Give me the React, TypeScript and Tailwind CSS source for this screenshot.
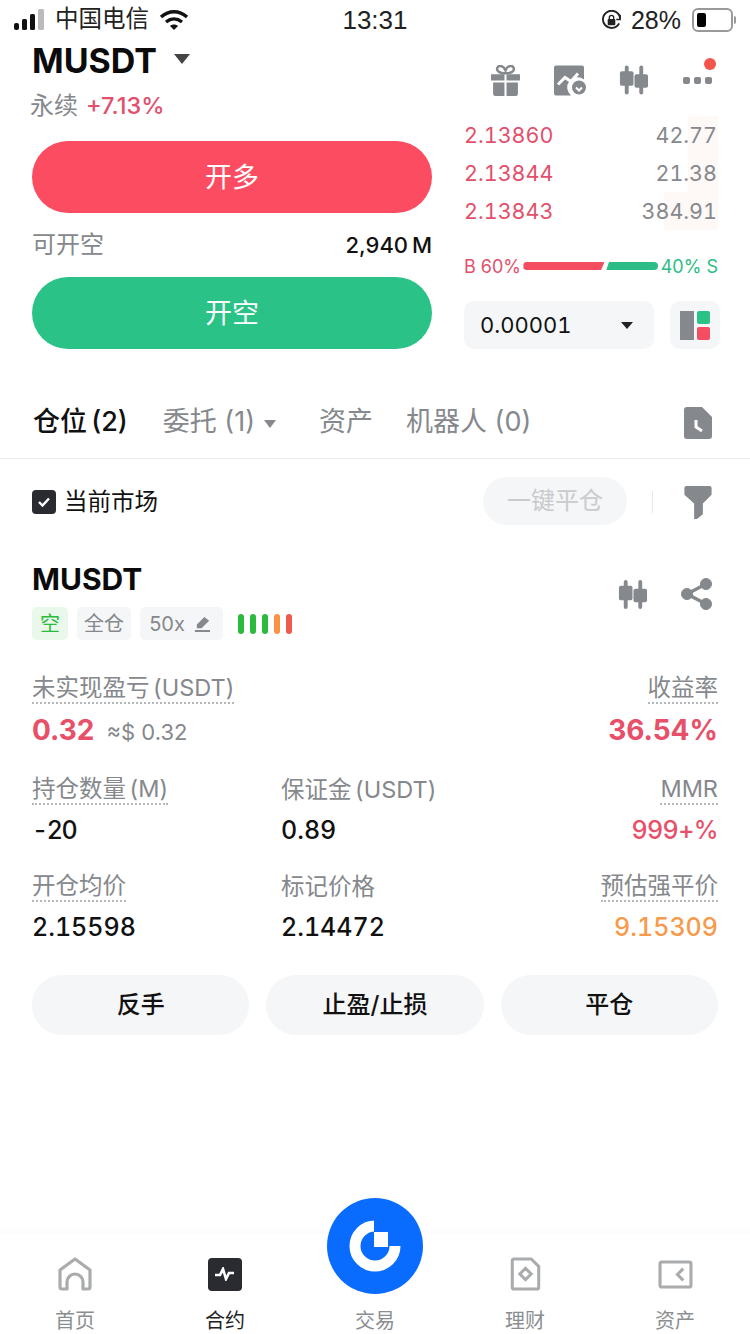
const Candles = ({ className }: { className?: string }) => (
  <svg viewBox="0 0 32 32" className={className} fill="#85888c">
    <rect x="7" y="1" width="4" height="30" rx="2" />
    <rect x="2" y="7" width="14" height="15" rx="2" />
    <rect x="22" y="1" width="4" height="30" rx="2" />
    <rect x="17" y="10" width="14" height="14" rx="2" />
  </svg>
);

const Label = ({ children }: { children: React.ReactNode }) => (
  <span className="border-b-2 border-dotted border-[#b5b8bb] text-[23.5px] leading-[29px] text-[#85888c] [word-spacing:-3px]">
    {children}
  </span>
);

const Cell = ({ label, value, dotted = true, color = "text-[#111]", right = false, valueClass = "" }: { label: string; value: string; dotted?: boolean; color?: string; right?: boolean; valueClass?: string }) => (
  <div className={`flex flex-col ${right ? "items-end" : "items-start"}`}>
    {dotted ? <Label>{label}</Label> : <span className="text-[23.5px] leading-[31px] text-[#85888c] [word-spacing:-3px]">{label}</span>}
    <span className={`mt-[10px] text-[25px] leading-[30px] font-medium tabular-nums ${color} ${valueClass}`}>{value}</span>
  </div>
);

const NavItem = ({ label, active, children }: { label: string; active?: boolean; children: React.ReactNode }) => (
  <div className="flex w-[150px] flex-col items-center">
    <div className="flex h-[50px] items-center justify-center">{children}</div>
    <span className={`mt-[9px] text-[20px] leading-[26px] ${active ? "text-[#222]" : "text-[#8b8e91]"}`}>{label}</span>
  </div>
);

export default function App() {
  const asks = [
    { price: "2.13860", size: "42.77" },
    { price: "2.13844", size: "21.38" },
    { price: "2.13843", size: "384.91" },
  ];

  return (
    <div className="relative flex h-[1334px] w-[750px] flex-col overflow-hidden bg-white font-['Inter','Noto_Sans_CJK_SC',sans-serif] text-[#111]">
      {/* status bar */}
      <div className="flex h-[40px] items-center justify-between pr-[14px] pl-[14px] font-['Liberation_Sans','Noto_Sans_CJK_SC',sans-serif] text-[26px] text-[#222]">
        <div className="flex w-[300px] items-center">
          <svg viewBox="0 0 32 22" className="h-[22px] w-[32px]">
            <rect x="0" y="14" width="5" height="7" rx="2" fill="#111" />
            <rect x="8" y="10" width="5" height="11" rx="1.5" fill="#111" />
            <rect x="16" y="5" width="5" height="16" rx="1.5" fill="#111" />
            <rect x="24" y="0" width="6" height="21" rx="1.5" fill="#bbb" />
          </svg>
          <span className="ml-[9px] text-[23.5px] leading-none">中国电信</span>
          <svg viewBox="0 0 30 22" className="ml-[10px] h-[22px] w-[30px]" fill="none" stroke="#111" strokeWidth="3.4">
            <path d="M2 8c8-7 18-7 26 0" />
            <path d="M7 13c5-4 11-4 16 0" />
            <path d="M15 21l-4-4c2-2 6-2 8 0z" fill="#111" stroke="none" />
          </svg>
        </div>
        <span className="text-[26px]">13:31</span>
        <div className="flex w-[300px] items-center justify-end">
          <svg viewBox="0 0 22 22" className="h-[21px] w-[21px]" fill="none" stroke="#222" strokeWidth="2">
            <path d="M19 14a9 9 0 1 1 1-5" />
            <path d="M20 5v5h-4" strokeWidth="1.6" />
            <rect x="7" y="9.5" width="8" height="6.5" rx="1" fill="#222" stroke="none" />
            <path d="M8.7 10V8a2.3 2.3 0 0 1 4.6 0v2" strokeWidth="1.4" />
          </svg>
          <span className="ml-[9px] text-[25px] leading-none">28%</span>
          <div className="ml-[11px] flex h-[24px] w-[41px] items-center rounded-[6px] border-2 border-[#999] p-[3px]">
            <div className="h-full w-[9px] rounded-[2px] bg-black" />
          </div>
          <div className="ml-[1px] h-[8px] w-[2px] rounded-r bg-[#999]" />
        </div>
      </div>

      {/* top trade panel */}
      <div className="flex pr-[30px] pl-[32px]">
        <div className="w-[400px]">
          <div className="flex items-center">
            <span className="text-[34px] leading-[42px] font-bold text-[#0b0b0b]">MUSDT</span>
            <span className="mt-[-5px] ml-[17px] h-0 w-0 border-x-[8px] border-t-[10px] border-x-transparent border-t-[#444]" />
          </div>
          <div className="mt-[8px] ml-[-2px] flex h-[32px] items-center">
            <span className="text-[24px] text-[#85888c]">永续</span>
            <span className="ml-[8px] text-[23.5px] font-medium text-[#e2506c]">+7.13%</span>
          </div>
          <button className="mt-[19px] flex h-[72px] w-full items-center justify-center rounded-[36px] bg-[#fc4c62] pt-[2px] text-[27px] text-white">开多</button>
          <div className="mt-[16px] flex h-[32px] items-center justify-between">
            <span className="text-[24px] text-[#85888c]">可开空</span>
            <span className="text-[22px] font-medium text-[#111] [word-spacing:-2px]">2,940 M</span>
          </div>
          <button className="mt-[16px] flex h-[72px] w-full items-center justify-center rounded-[36px] bg-[#2bc287] pt-[2px] text-[27px] text-white">开空</button>
        </div>

        <div className="ml-[32px] w-[256px]">
          <div className="mt-[24px] flex h-[32px] items-center justify-between pr-[5px] pl-[26px]">
            <svg viewBox="0 0 30 30" className="h-[31px] w-[31px]" fill="#85888c">
              <path d="M1 9h13v6H1zM16 9h13v6H16zM3 17h11v13H5a2 2 0 0 1-2-2zM16 17h11v11a2 2 0 0 1-2 2h-9z" />
              <path d="M14 8C10 8 6 6 7 3s6-3 8 2c2-5 7-5 8-2s-3 5-7 5z" fill="none" stroke="#85888c" strokeWidth="2.4" />
            </svg>
            <svg viewBox="0 0 34 30" className="ml-[31px] h-[31px] w-[34px]" fill="#85888c">
              <path d="M3 0h26a2 2 0 0 1 2 2v12a9 9 0 0 0-13 16H3a2 2 0 0 1-2-2V2a2 2 0 0 1 2-2z" />
              <path d="M5 19l7-7 6 4 7-8" fill="none" stroke="#fff" strokeWidth="3" />
              <circle cx="26" cy="22" r="7" />
              <path d="M23 22l3 3 3-3" fill="none" stroke="#fff" strokeWidth="2" />
            </svg>
            <Candles className="ml-[31px] h-[32px] w-[31px]" />
            <div className="relative ml-[33px] flex h-[32px] w-[32px] items-center gap-[4px]">
              <span className="h-[7px] w-[7px] rounded-[2px] bg-[#85888c]" />
              <span className="h-[7px] w-[7px] rounded-[2px] bg-[#85888c]" />
              <span className="h-[7px] w-[7px] rounded-[2px] bg-[#85888c]" />
              <span className="absolute top-[-6px] right-[-1px] h-[12px] w-[12px] rounded-full bg-[#f4544c]" />
            </div>
          </div>
          <div className="mt-[20px] flex flex-col">
            {asks.map((a, i) => (
              <div key={a.price} className="relative flex h-[38px] items-center justify-between pr-[3px] text-[21.5px] tabular-nums">
                <div className={`absolute top-0 right-[2px] bottom-0 bg-[#fef8f7] ${i === 2 ? "w-[54px]" : "w-[30px]"}`} />
                <span className="relative text-[#e2506c]">{a.price}</span>
                <span className="relative text-[#85888c]">{a.size}</span>
              </div>
            ))}
          </div>
          <div className="mt-[23px] flex h-[26px] items-center justify-between pr-[2px] text-[18px]">
            <span className="text-[#e2506c]">B 60%</span>
            <div className="flex items-center">
              <div className="h-[8px] w-[81px] rounded-l-full bg-[#f44c60] [clip-path:polygon(0_0,100%_0,96%_100%,0_100%)]" />
              <div className="ml-[2px] h-[8px] w-[52px] rounded-r-full bg-[#2bbd85] [clip-path:polygon(5%_0,100%_0,100%_100%,0_100%)]" />
            </div>
            <span className="text-[#2bbd85]">40% S</span>
          </div>
          <div className="mt-[22px] flex items-center justify-between">
            <div className="flex h-[48px] w-[190px] items-center justify-between rounded-[10px] bg-[#f5f6f7] pr-[21px] pl-[16px]">
              <span className="text-[22px] text-[#111] tabular-nums">0.00001</span>
              <span className="h-0 w-0 border-x-[6px] border-t-[7px] border-x-transparent border-t-[#222]" />
            </div>
            <div className="flex h-[48px] w-[50px] items-center justify-center rounded-[10px] bg-[#f5f6f7] pr-[1px]">
              <div className="flex gap-[3px]">
                <div className="h-[29px] w-[14px] bg-[#85888c]" />
                <div className="flex flex-col gap-[3px]">
                  <div className="h-[13px] w-[13px] rounded-[2px] bg-[#2bc287]" />
                  <div className="h-[13px] w-[13px] rounded-[2px] bg-[#f44c60]" />
                </div>
              </div>
            </div>
          </div>
        </div>
      </div>

      {/* tabs */}
      <div className="mt-[32px] flex h-[78px] items-center border-b border-[#ededed] pt-[6px] pr-[38px] pl-[33px] text-[27px] text-[#85888c]">
        <span className="font-medium text-[#111] [word-spacing:-3px]">仓位 (2)</span>
        <span className="ml-[35px]">委托 (1)</span>
        <span className="mt-[2px] ml-[9px] h-0 w-0 border-x-[6px] border-t-[8px] border-x-transparent border-t-[#85888c]" />
        <span className="ml-[43px]">资产</span>
        <span className="ml-[33px]">机器人 (0)</span>
        <svg viewBox="0 0 28 32" className="ml-auto h-[32px] w-[28px]" fill="#85888c">
          <path d="M3 0h15l10 10v19a3 3 0 0 1-3 3H3a3 3 0 0 1-3-3V3a3 3 0 0 1 3-3z" />
          <path d="M12 13v7l6 4" fill="none" stroke="#fff" strokeWidth="3" />
        </svg>
      </div>

      {/* filter row */}
      <div className="mt-[19px] flex h-[48px] items-center pr-[38px] pl-[32px]">
        <span className="flex h-[24px] w-[24px] items-center justify-center rounded-[4px] bg-[#2a2b30]">
          <svg viewBox="0 0 16 16" className="h-[16px] w-[16px]" fill="none" stroke="#fff" strokeWidth="2.4"><path d="M3 8l3.5 3.5L13 4.5" /></svg>
        </span>
        <span className="ml-[8px] text-[23.5px] text-[#111]">当前市场</span>
        <div className="mt-[-2px] ml-auto flex h-[48px] w-[144px] items-center justify-center rounded-full bg-[#f5f6f7] text-[24px] text-[#c9cbcd]">一键平仓</div>
        <div className="ml-[25px] h-[22px] w-px bg-[#e8e8e8]" />
        <svg viewBox="0 0 28 34" className="ml-[31px] h-[33px] w-[28px]" fill="#85888c">
          <path d="M0 2a2 2 0 0 1 2-2h24a2 2 0 0 1 2 2v7l-9 9v11l-6 5h-3V18L0 9z" />
        </svg>
      </div>

      {/* position */}
      <div className="mt-[35px] px-[32px]">
        <div className="flex items-start justify-between">
          <div>
            <div className="text-[30px] leading-[36px] font-bold text-[#0b0b0b]">MUSDT</div>
            <div className="mt-[10px] flex h-[33px] items-center text-[20px] text-[#85888c]">
              <span className="flex h-[33px] w-[36px] items-center justify-center rounded-[5px] bg-[#e9f8ea] text-[#2bbb3c]">空</span>
              <span className="ml-[9px] flex h-[33px] w-[54px] items-center justify-center rounded-[5px] bg-[#f5f6f7]">全仓</span>
              <span className="ml-[9px] flex h-[33px] w-[83px] items-center justify-center gap-[9px] rounded-[5px] bg-[#f5f6f7] pr-[3px]">
                50x
                <svg viewBox="0 0 18 18" className="h-[17px] w-[17px]" fill="#85888c"><path d="M11 2l5 4-8 8H3l0-4zM1 16h16v2H1z" /></svg>
              </span>
              <div className="ml-[15px] flex gap-[6px]">
                {["bg-[#2bbb3c]", "bg-[#2bbb3c]", "bg-[#2bbb3c]", "bg-[#f99245]", "bg-[#ee5b4a]"].map((c, i) => (
                  <span key={i} className={`h-[20px] w-[6px] rounded-full ${c}`} />
                ))}
              </div>
            </div>
          </div>
          <div className="mt-[17px] flex items-center pr-[5px]">
            <Candles className="h-[31px] w-[31px]" />
            <svg viewBox="0 0 32 32" className="ml-[33px] h-[32px] w-[32px]" fill="#85888c" stroke="#85888c">
              <circle cx="6" cy="16" r="5.5" />
              <circle cx="25" cy="6" r="5.5" />
              <circle cx="25" cy="26" r="5.5" />
              <path d="M6 16L25 6M6 16l19 10" fill="none" strokeWidth="3.5" />
            </svg>
          </div>
        </div>

        <div className="mt-[33px] flex items-start justify-between">
          <div className="flex flex-col items-start">
            <Label>未实现盈亏 (USDT)</Label>
            <div className="mt-[8px] flex items-baseline">
              <span className="text-[28px] leading-[36px] font-bold text-[#e8506a]">0.32</span>
              <span className="ml-[12px] text-[22px] text-[#85888c]">≈$ 0.32</span>
            </div>
          </div>
          <div className="flex flex-col items-end">
            <Label>收益率</Label>
            <span className="mt-[8px] text-[28px] leading-[36px] font-bold text-[#e8506a]">36.54%</span>
          </div>
        </div>

        <div className="mt-[25px] grid grid-cols-[249px_1fr_1fr]">
          <Cell label="持仓数量 (M)" value="-20" valueClass="tracking-[-1.5px]" />
          <Cell label="保证金 (USDT)" value="0.89" dotted={false} />
          <Cell label="MMR" value="999+%" color="text-[#e8506a]" right valueClass="tracking-[-0.6px]" />
        </div>
        <div className="mt-[26px] grid grid-cols-[249px_1fr_1fr]">
          <Cell label="开仓均价" value="2.15598" />
          <Cell label="标记价格" value="2.14472" dotted={false} />
          <Cell label="预估强平价" value="9.15309" color="text-[#f79a4b]" right />
        </div>

        <div className="mt-[33px] grid grid-cols-3 gap-[17px]">
          {["反手", "止盈/止损", "平仓"].map((t) => (
            <button key={t} className="h-[60px] rounded-full bg-[#f5f6f7] text-[24px] font-medium text-[#111]">{t}</button>
          ))}
        </div>
      </div>

      {/* bottom nav */}
      <div className="mt-auto flex h-[100px] items-start bg-white pt-[15px] shadow-[0_-3px_8px_rgba(0,0,0,0.025)]">
        <NavItem label="首页">
          <svg viewBox="0 0 34 34" className="h-[34px] w-[34px]" fill="none" stroke="#a9abad" strokeWidth="3.2" strokeLinejoin="round">
            <path d="M2 13L17 2l15 11v17a2 2 0 0 1-2 2h-5v-7a8 8 0 0 0-16 0v7H4a2 2 0 0 1-2-2z" />
          </svg>
        </NavItem>
        <NavItem label="合约" active>
          <div className="flex h-[33px] w-[34px] items-center justify-center rounded-[4px] bg-[#2a2b30]">
            <svg viewBox="0 0 20 14" className="h-[14px] w-[20px]" fill="none" stroke="#fff" strokeWidth="2.6">
              <path d="M0 8h5l3-6 3 10 3-6h5" />
            </svg>
          </div>
        </NavItem>
        <NavItem label="交易">
          <span />
        </NavItem>
        <NavItem label="理财">
          <svg viewBox="0 0 32 36" className="h-[34px] w-[31px]" fill="none" stroke="#a9abad" strokeWidth="3.2">
            <path d="M4 2h18l8 8v22a2 2 0 0 1-2 2H4a2 2 0 0 1-2-2V4a2 2 0 0 1 2-2z" />
            <path d="M16 12l6 6-6 6-6-6z" />
          </svg>
        </NavItem>
        <NavItem label="资产">
          <svg viewBox="0 0 36 30" className="h-[29px] w-[35px]" fill="none" stroke="#a9abad" strokeWidth="3.2">
            <rect x="2" y="2" width="32" height="26" rx="2" />
            <path d="M26 9l-6 6 6 6" />
          </svg>
        </NavItem>
      </div>

      {/* center trade button */}
      <div className="absolute top-[1198px] left-[327px] flex h-[96px] w-[96px] items-center justify-center rounded-full bg-[#0a6cff]">
        <svg viewBox="0 0 54 54" className="h-[54px] w-[54px]">
          <circle cx="27" cy="27" r="20" fill="none" stroke="#fff" strokeWidth="11" />
          <rect x="26" y="-1" width="30" height="28" fill="#0a6cff" />
          <rect x="26" y="13" width="14" height="15" fill="#fff" />
        </svg>
      </div>
    </div>
  );
}
